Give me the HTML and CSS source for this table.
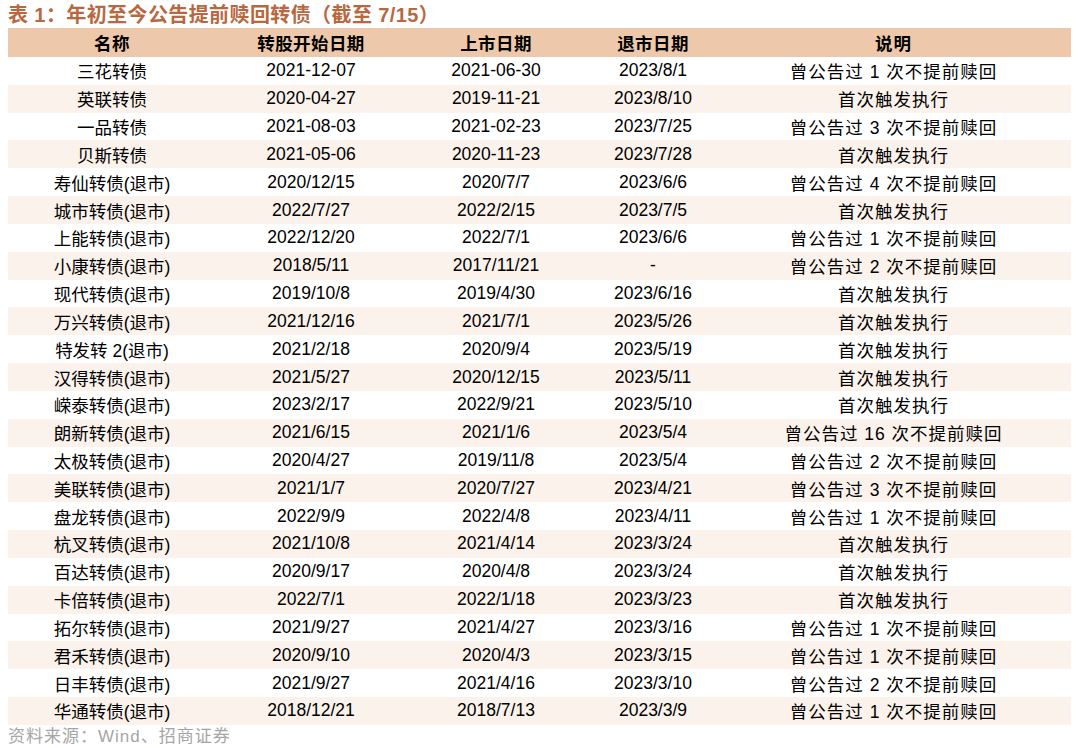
FILE: index.html
```html
<!DOCTYPE html>
<html lang="zh-CN">
<head>
<meta charset="utf-8">
<title>年初至今公告提前赎回转债</title>
<link rel="stylesheet" href="styles.css">
</head>
<body>
<div class="page">
  <h1 class="title">表 1：年初至今公告提前赎回转债（截至 7/15）</h1>
  <table class="data">
    <colgroup>
      <col class="c1"><col class="c2"><col class="c3"><col class="c4"><col class="c5">
    </colgroup>
    <thead>
      <tr><th>名称</th><th>转股开始日期</th><th>上市日期</th><th>退市日期</th><th class="note">说明</th></tr>
    </thead>
    <tbody>
      <tr><td>三花转债</td><td>2021-12-07</td><td>2021-06-30</td><td>2023/8/1</td><td class="note">曾公告过 1 次不提前赎回</td></tr>
      <tr><td>英联转债</td><td>2020-04-27</td><td>2019-11-21</td><td>2023/8/10</td><td class="note">首次触发执行</td></tr>
      <tr><td>一品转债</td><td>2021-08-03</td><td>2021-02-23</td><td>2023/7/25</td><td class="note">曾公告过 3 次不提前赎回</td></tr>
      <tr><td>贝斯转债</td><td>2021-05-06</td><td>2020-11-23</td><td>2023/7/28</td><td class="note">首次触发执行</td></tr>
      <tr><td>寿仙转债(退市)</td><td>2020/12/15</td><td>2020/7/7</td><td>2023/6/6</td><td class="note">曾公告过 4 次不提前赎回</td></tr>
      <tr><td>城市转债(退市)</td><td>2022/7/27</td><td>2022/2/15</td><td>2023/7/5</td><td class="note">首次触发执行</td></tr>
      <tr><td>上能转债(退市)</td><td>2022/12/20</td><td>2022/7/1</td><td>2023/6/6</td><td class="note">曾公告过 1 次不提前赎回</td></tr>
      <tr><td>小康转债(退市)</td><td>2018/5/11</td><td>2017/11/21</td><td>-</td><td class="note">曾公告过 2 次不提前赎回</td></tr>
      <tr><td>现代转债(退市)</td><td>2019/10/8</td><td>2019/4/30</td><td>2023/6/16</td><td class="note">首次触发执行</td></tr>
      <tr><td>万兴转债(退市)</td><td>2021/12/16</td><td>2021/7/1</td><td>2023/5/26</td><td class="note">首次触发执行</td></tr>
      <tr><td>特发转 2(退市)</td><td>2021/2/18</td><td>2020/9/4</td><td>2023/5/19</td><td class="note">首次触发执行</td></tr>
      <tr><td>汉得转债(退市)</td><td>2021/5/27</td><td>2020/12/15</td><td>2023/5/11</td><td class="note">首次触发执行</td></tr>
      <tr><td>嵘泰转债(退市)</td><td>2023/2/17</td><td>2022/9/21</td><td>2023/5/10</td><td class="note">首次触发执行</td></tr>
      <tr><td>朗新转债(退市)</td><td>2021/6/15</td><td>2021/1/6</td><td>2023/5/4</td><td class="note">曾公告过 16 次不提前赎回</td></tr>
      <tr><td>太极转债(退市)</td><td>2020/4/27</td><td>2019/11/8</td><td>2023/5/4</td><td class="note">曾公告过 2 次不提前赎回</td></tr>
      <tr><td>美联转债(退市)</td><td>2021/1/7</td><td>2020/7/27</td><td>2023/4/21</td><td class="note">曾公告过 3 次不提前赎回</td></tr>
      <tr><td>盘龙转债(退市)</td><td>2022/9/9</td><td>2022/4/8</td><td>2023/4/11</td><td class="note">曾公告过 1 次不提前赎回</td></tr>
      <tr><td>杭叉转债(退市)</td><td>2021/10/8</td><td>2021/4/14</td><td>2023/3/24</td><td class="note">首次触发执行</td></tr>
      <tr><td>百达转债(退市)</td><td>2020/9/17</td><td>2020/4/8</td><td>2023/3/24</td><td class="note">首次触发执行</td></tr>
      <tr><td>卡倍转债(退市)</td><td>2022/7/1</td><td>2022/1/18</td><td>2023/3/23</td><td class="note">首次触发执行</td></tr>
      <tr><td>拓尔转债(退市)</td><td>2021/9/27</td><td>2021/4/27</td><td>2023/3/16</td><td class="note">曾公告过 1 次不提前赎回</td></tr>
      <tr><td>君禾转债(退市)</td><td>2020/9/10</td><td>2020/4/3</td><td>2023/3/15</td><td class="note">曾公告过 1 次不提前赎回</td></tr>
      <tr><td>日丰转债(退市)</td><td>2021/9/27</td><td>2021/4/16</td><td>2023/3/10</td><td class="note">曾公告过 2 次不提前赎回</td></tr>
      <tr><td>华通转债(退市)</td><td>2018/12/21</td><td>2018/7/13</td><td>2023/3/9</td><td class="note">曾公告过 1 次不提前赎回</td></tr>
    </tbody>
  </table>
  <p class="source">资料来源：Wind、招商证券</p>
</div>
</body>
</html>
```

FILE: styles.css
```css
html, body {
  margin: 0;
  padding: 0;
  background: #ffffff;
}

body {
  font-family: "Liberation Sans", "Noto Sans CJK SC", sans-serif;
  color: #000000;
}

.page {
  padding: 0 8px;
}

.title {
  margin: 0;
  height: 28px;
  line-height: 31px;
  font-size: 20px;
  letter-spacing: 0.4px;
  font-weight: bold;
  color: #b8683f;
  white-space: nowrap;
}

.data {
  width: 1063px;
  table-layout: fixed;
  border-collapse: collapse;
  border-spacing: 0;
}

.c1 { width: 208px; }
.c2 { width: 190px; }
.c3 { width: 180px; }
.c4 { width: 134px; }
.c5 { width: 351px; }

.data th,
.data td {
  padding: 0;
  text-align: center;
  white-space: nowrap;
  font-size: 17.5px;
}

.data .note {
  padding-right: 4px;
  letter-spacing: 1px;
}

.data thead tr {
  height: 29px;
  background: #eec8aa;
}

.data th {
  font-weight: bold;
  letter-spacing: 0.4px;
}

.data tbody tr {
  height: 27.83px;
}

.data tbody tr:nth-child(even) {
  background: #faf2eb;
}

.source {
  margin: 0;
  height: 23px;
  line-height: 24px;
  font-size: 17px;
  letter-spacing: 1px;
  color: #a6a6a6;
  white-space: nowrap;
}
```
